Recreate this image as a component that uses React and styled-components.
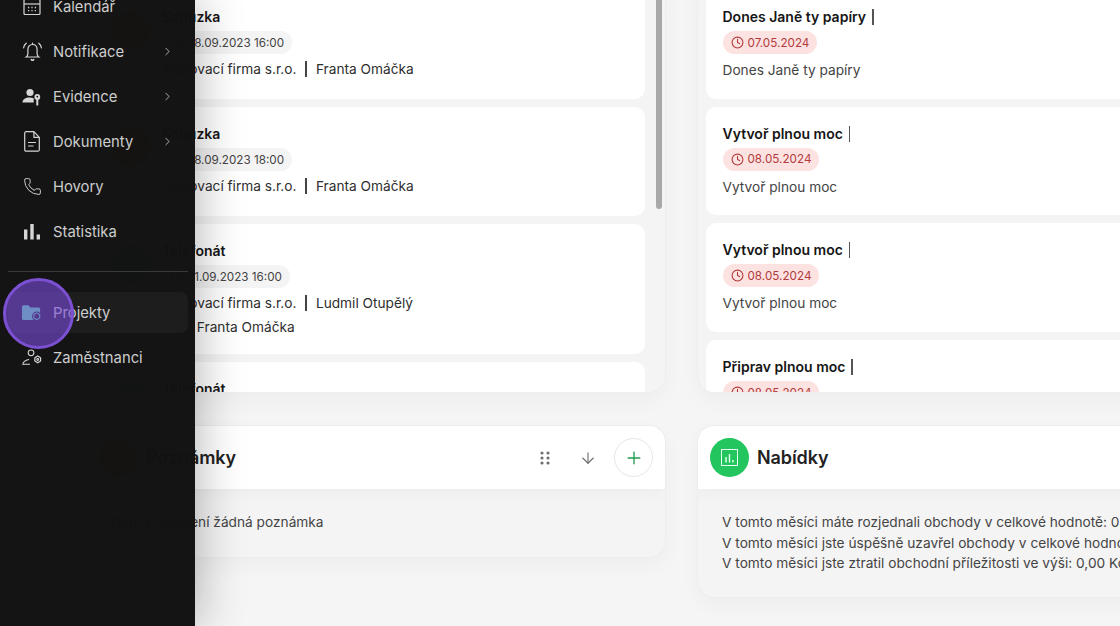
import React from "react";
import styled, { createGlobalStyle } from "styled-components";
import { ChevronRight, Clock, ArrowDown, Plus, Phone } from "lucide-react";

const Global = createGlobalStyle`
  html, body { margin: 0; padding: 0; height: 100%; overflow: hidden; background: #f5f5f5; }
  * { box-sizing: border-box; }
  body { font-family: Inter, "Noto Sans", sans-serif; }
`;

const Page = styled.div`
  position: relative;
  width: 1120px;
  height: 626px;
  overflow: hidden;
  background: #f5f5f5;
`;

const Content = styled.main`
  display: grid;
  grid-template-columns: 578px 578px;
  column-gap: 33px;
  row-gap: 34px;
  align-items: start;
  margin-top: -18px;
  padding-left: 87px;
  width: 1400px;
`;

const Panel = styled.section`
  position: relative;
  height: 410px;
  overflow: hidden;
  padding: 8px ${(p) => (p.$scroll ? "20px" : "0")} 0 8px;
  background: #f4f4f4;
  border-radius: 0 0 16px 16px;
  box-shadow: 0 0 0 1px #ededed, 0 8px 22px rgba(0, 0, 0, 0.035);
  display: flex;
  flex-direction: column;
  gap: 8px;
`;

const Scrollbar = styled.div`
  position: absolute;
  top: 0;
  right: 3px;
  width: 6px;
  height: 227px;
  border-radius: 3px;
  background: #a8a8a8;
`;

const TaskCard = styled.article`
  flex: none;
  display: flex;
  gap: 12px;
  background: #fff;
  border-radius: 10px;
  padding: 17px 17px ${(p) => p.$bottom}px ${(p) => p.$left}px;
`;

const Avatar = styled.div`
  flex: none;
  width: 38px;
  height: 38px;
  margin-top: 4px;
  border-radius: 50%;
  background: ${(p) => p.$color};
`;

const TaskBody = styled.div`
  min-width: 0;
  flex: 1;
`;

const TaskTitle = styled.h3`
  display: flex;
  align-items: center;
  margin: 0;
  height: 20px;
  font-size: 14px;
  line-height: 20px;
  font-weight: 600;
  color: #161616;
`;

const TitleBar = styled.span`
  width: 1.5px;
  height: 16px;
  margin-left: 6px;
  background: #555;
`;

const DatePill = styled.div`
  display: inline-flex;
  align-items: center;
  gap: 4px;
  height: 23px;
  margin-top: 4px;
  padding: 0 8px;
  border-radius: 12px;
  font-size: 11.7px;
  background: ${(p) => (p.$late ? "#fde2e2" : "#f4f4f4")};
  color: ${(p) => (p.$late ? "#b23b3b" : "#444")};
  & > svg { flex: none; }
`;

const MetaRow = styled.div`
  display: flex;
  align-items: center;
  height: 20px;
  margin-top: 4.5px;
  font-size: 13.7px;
  line-height: 20px;
  color: #2e2e2e;
`;

const MetaSep = styled.span`
  width: 1.5px;
  height: 16px;
  margin: 0 9px;
  background: #444;
`;

const MetaLead = styled.span`
  margin-right: 9px;
`;

const Desc = styled.p`
  margin: 6px 0 0;
  font-size: 13.7px;
  line-height: 20px;
  color: #444;
`;

const InfoCard = styled.section`
  border-radius: 16px;
  background: #f4f4f4;
  overflow: hidden;
  box-shadow: 0 0 0 1px #ededed, 0 8px 22px rgba(0, 0, 0, 0.035);
`;

const InfoHeader = styled.header`
  display: flex;
  align-items: center;
  height: 63px;
  padding: 0 12px;
  gap: 8px;
  background: #fff;
  box-shadow: 0 4px 14px rgba(0, 0, 0, 0.035);
`;

const IconCircle = styled.div`
  display: flex;
  align-items: center;
  justify-content: center;
  width: 39px;
  height: 39px;
  border-radius: 50%;
  background: ${(p) => p.$color};
`;

const InfoTitle = styled.h2`
  margin: 0;
  font-size: 18px;
  line-height: 24px;
  font-weight: 600;
  letter-spacing: -0.1px;
  color: #222;
`;

const Actions = styled.div`
  display: flex;
  align-items: center;
  margin-left: auto;
  color: #6f6f6f;
`;

const GhostAction = styled.span`
  display: flex;
  align-items: center;
  justify-content: center;
  width: 43px;
  height: 39px;
`;

const AddButton = styled.button`
  display: flex;
  align-items: center;
  justify-content: center;
  width: 39px;
  height: 39px;
  margin-left: 5px;
  padding: 0;
  border-radius: 50%;
  border: 1px solid #e6e6e6;
  background: #fff;
  color: #1f9d50;
`;

const InfoBody = styled.div`
  padding: 23px 24px ${(p) => p.$bottom}px;
  font-size: 13.7px;
  line-height: 20.5px;
  color: #444;
  white-space: nowrap;
`;

const Sidebar = styled.aside`
  position: absolute;
  left: 0;
  top: 0;
  bottom: 0;
  width: 195px;
  overflow: hidden;
  background: rgba(17, 17, 17, 0.99);
  box-shadow: 0 0 46px rgba(0, 0, 0, 0.32);
`;

const NavList = styled.nav`
  display: flex;
  flex-direction: column;
  margin-top: -16px;
  padding: 0 7px 0 8px;
`;

const NavItem = styled.div`
  display: flex;
  align-items: center;
  height: ${(p) => (p.$active ? "41px" : "45px")};
  margin: ${(p) => (p.$active ? "2px 0" : "0")};
  padding: 0 16px 0 14px;
  border-radius: 8px;
  gap: 11px;
  font-size: 14.8px;
  background: ${(p) => (p.$active ? "#1d1d1d" : "transparent")};
  color: #cdcdcd;
`;

const NavIcon = styled.span`
  display: flex;
  align-items: center;
  justify-content: center;
  flex: none;
  width: 20px;
  height: 20px;
  color: #d6d6d6;
`;

const NavChevron = styled(ChevronRight)`
  margin-left: auto;
  margin-right: -2px;
  color: #cfcfcf;
`;

const NavDivider = styled.hr`
  width: 180px;
  height: 1px;
  margin: 16.5px 0 18.5px;
  border: 0;
  background: #3a3a3a;
`;

const CursorHalo = styled.div`
  position: absolute;
  left: 3px;
  top: 277.5px;
  width: 71px;
  height: 71px;
  border-radius: 50%;
  border: 3px solid #7c50d2;
  background: rgba(124, 77, 222, 0.6);
  pointer-events: none;
`;

const CalendarIcon = () => (
  <svg width="18" height="18" viewBox="0 0 18 18" fill="none" stroke="currentColor" strokeWidth="1.2">
    <rect x="1" y="1.5" width="16" height="15" rx="1" />
    <path d="M1 6h16" />
    <path d="M5 9.5h1.2M8.4 9.5h1.2M11.8 9.5h1.2M5 12.7h1.2M8.4 12.7h1.2M11.8 12.7h1.2" strokeWidth="1.3" />
  </svg>
);

const BellIcon = () => (
  <svg width="19" height="20" viewBox="0 0 19 20" fill="none" stroke="currentColor" strokeWidth="1.2" strokeLinecap="round">
    <path d="M9.5 2.5c-2.9 0-4.6 2.2-4.6 5v4.3c0 1.4-.7 2.5-1.7 3.2h12.6c-1-.7-1.7-1.8-1.7-3.2V7.5c0-2.8-1.7-5-4.6-5z" />
    <path d="M8.3 17.6c.6.6 1.8.6 2.4 0" strokeWidth="1.5" />
    <path d="M3.2 1.2C1.7 2.4.8 4 .6 5.8M15.8 1.2c1.5 1.2 2.4 2.8 2.6 4.6" />
    <path d="M9.5 1v1.4" />
  </svg>
);

const EvidenceIcon = () => (
  <svg width="20" height="18" viewBox="0 0 20 18" fill="currentColor">
    <circle cx="8" cy="4.5" r="3.6" />
    <path d="M0.5 14.5c0-3.2 3.2-5 7-5 1.6 0 3 .3 4.2.8v4.2z" />
    <circle cx="15.3" cy="9" r="2.9" />
    <rect x="14.3" y="10" width="2" height="7.5" rx=".5" />
    <circle cx="15.3" cy="8.6" r=".9" fill="#111" />
  </svg>
);

const DocumentIcon = () => (
  <svg width="16" height="21" viewBox="0 0 16 21" fill="none" stroke="currentColor" strokeWidth="1.2" strokeLinejoin="round">
    <path d="M1.7.7h8.2l5.4 5.6v12.4a1.5 1.5 0 0 1-1.5 1.5H1.7A1.5 1.5 0 0 1 .7 18.7V2.2A1.5 1.5 0 0 1 1.7.7z" />
    <path d="M9.9.9v5.4h5.2" />
    <path d="M4 11.5h8M4 15h5.5" />
  </svg>
);

const StatsIcon = () => (
  <svg width="18" height="18" viewBox="0 0 18 18" fill="currentColor">
    <rect x="1" y="6.5" width="3.4" height="10" />
    <rect x="7.3" y="1" width="3.4" height="15.5" />
    <rect x="13.6" y="11.5" width="3.4" height="5" />
  </svg>
);

const FolderGearIcon = () => (
  <svg width="21" height="18" viewBox="0 0 21 18">
    <path d="M0 2.4A1.6 1.6 0 0 1 1.6.8h5.2l2 2.4h8.6a1.6 1.6 0 0 1 1.6 1.6v10a1.6 1.6 0 0 1-1.6 1.6H1.6A1.6 1.6 0 0 1 0 14.8z" fill="#5af0a0" />
    <circle cx="15.5" cy="12.5" r="5" fill="#1d1d1d" />
    <path d="M15.5 8.9l3.1 1.8v3.6l-3.1 1.8-3.1-1.8v-3.6z" fill="none" stroke="#5af0a0" strokeWidth="1.1" />
  </svg>
);

const UserGearIcon = () => (
  <svg width="21" height="17" viewBox="0 0 21 17" fill="none" stroke="currentColor" strokeWidth="1.1" strokeLinecap="round">
    <circle cx="9.5" cy="3.6" r="3" />
    <path d="M1 15.5c-.2-1.9 2.4-4.4 6-5" />
    <path d="M1 15.5h7" />
    <path d="M16.5 7l3 1.8v3.4l-3 1.8-3-1.8V8.800z" strokeWidth="1.3" />
    <circle cx="16.5" cy="10.500" r="1" />
  </svg>
);

const DotsIcon = () => (
  <svg width="10" height="14" viewBox="0 0 10 14" fill="currentColor">
    {[2, 7, 12].map((y) => (
      <React.Fragment key={y}>
        <circle cx="2" cy={y} r="1.6" />
        <circle cx="8" cy={y} r="1.6" />
      </React.Fragment>
    ))}
  </svg>
);

const ChartBoxIcon = () => (
  <svg width="17" height="17" viewBox="0 0 17 17" fill="none" stroke="#e9fff1" strokeWidth="1">
    <rect x=".5" y=".5" width="16" height="16" />
    <path d="M5 8v5.5M8.500 5v8.500M12 11v2.500" strokeWidth="1.4" />
  </svg>
);

const leftTasks = [
  { title: "Schůzka", date: "28.09.2023 16:00", color: "#f59e0b", person: "Franta Omáčka", bottom: 20.5 },
  { title: "Schůzka", date: "28.09.2023 18:00", color: "#f59e0b", person: "Franta Omáčka", bottom: 20.5 },
  { title: "Telefonát", date: "21.09.2023 16:00", color: "#22c55e", person: "Ludmil Otupělý", extra: "Franta Omáčka", bottom: 17 },
  { title: "Telefonát", date: "21.09.2023 16:00", color: "#22c55e", person: "Ludmil Otupělý", bottom: 20.5 },
];

const rightTasks = [
  { title: "Dones Janě ty papíry", date: "07.05.2024" },
  { title: "Vytvoř plnou moc", date: "08.05.2024" },
  { title: "Vytvoř plnou moc", date: "08.05.2024" },
  { title: "Připrav plnou moc", date: "08.05.2024" },
];

const navTop = [
  { label: "Kalendář", icon: <CalendarIcon /> },
  { label: "Notifikace", icon: <BellIcon />, more: true },
  { label: "Evidence", icon: <EvidenceIcon />, more: true },
  { label: "Dokumenty", icon: <DocumentIcon />, more: true },
  { label: "Hovory", icon: <Phone size={19} strokeWidth={1.2} /> },
  { label: "Statistika", icon: <StatsIcon /> },
];

export default function App() {
  return (
    <Page>
      <Global />
      <Content>
        <Panel $scroll>
          {leftTasks.map((t, i) => (
            <TaskCard key={i} $bottom={t.bottom} $left={17}>
              <Avatar $color={t.color} />
              <TaskBody>
                <TaskTitle>{t.title}</TaskTitle>
                <DatePill>
                  <Clock size={13} />
                  {t.date}
                </DatePill>
                <MetaRow>
                  Testovací firma s.r.o.
                  <MetaSep />
                  {t.person}
                </MetaRow>
                {t.extra && (
                  <MetaRow>
                    <MetaLead>Pro:</MetaLead>
                    {t.extra}
                  </MetaRow>
                )}
              </TaskBody>
            </TaskCard>
          ))}
          <Scrollbar />
        </Panel>
        <Panel>
          {rightTasks.map((t, i) => (
            <TaskCard key={i} $bottom={18.7} $left={16.5}>
              <TaskBody>
                <TaskTitle>
                  {t.title}
                  <TitleBar />
                </TaskTitle>
                <DatePill $late>
                  <Clock size={13} />
                  {t.date}
                </DatePill>
                <Desc>{t.title}</Desc>
              </TaskBody>
            </TaskCard>
          ))}
        </Panel>
        <InfoCard>
          <InfoHeader>
            <IconCircle $color="#f5b301" />
            <InfoTitle>Poznámky</InfoTitle>
            <Actions>
              <GhostAction>
                <DotsIcon />
              </GhostAction>
              <GhostAction>
                <ArrowDown size={18} strokeWidth={1.5} />
              </GhostAction>
              <AddButton aria-label="Přidat">
                <Plus size={20} strokeWidth={1.6} />
              </AddButton>
            </Actions>
          </InfoHeader>
          <InfoBody $bottom={24}>Není k nalezení žádná poznámka</InfoBody>
        </InfoCard>
        <InfoCard>
          <InfoHeader>
            <IconCircle $color="#22c55e">
              <ChartBoxIcon />
            </IconCircle>
            <InfoTitle>Nabídky</InfoTitle>
          </InfoHeader>
          <InfoBody $bottom={23}>
            V tomto měsíci máte rozjednali obchody v celkové hodnotě: 0,00 Kč
            <br />
            V tomto měsíci jste úspěšně uzavřel obchody v celkové hodnotě: 0,00 Kč
            <br />
            V tomto měsíci jste ztratil obchodní příležitosti ve výši: 0,00 Kč
          </InfoBody>
        </InfoCard>
      </Content>
      <Sidebar>
        <NavList>
          {navTop.map((n) => (
            <NavItem key={n.label}>
              <NavIcon>{n.icon}</NavIcon>
              {n.label}
              {n.more && <NavChevron size={13} strokeWidth={1.5} />}
            </NavItem>
          ))}
          <NavDivider />
          <NavItem $active>
            <NavIcon>
              <FolderGearIcon />
            </NavIcon>
            Projekty
          </NavItem>
          <NavItem>
            <NavIcon>
              <UserGearIcon />
            </NavIcon>
            Zaměstnanci
          </NavItem>
        </NavList>
        <CursorHalo />
      </Sidebar>
    </Page>
  );
}
